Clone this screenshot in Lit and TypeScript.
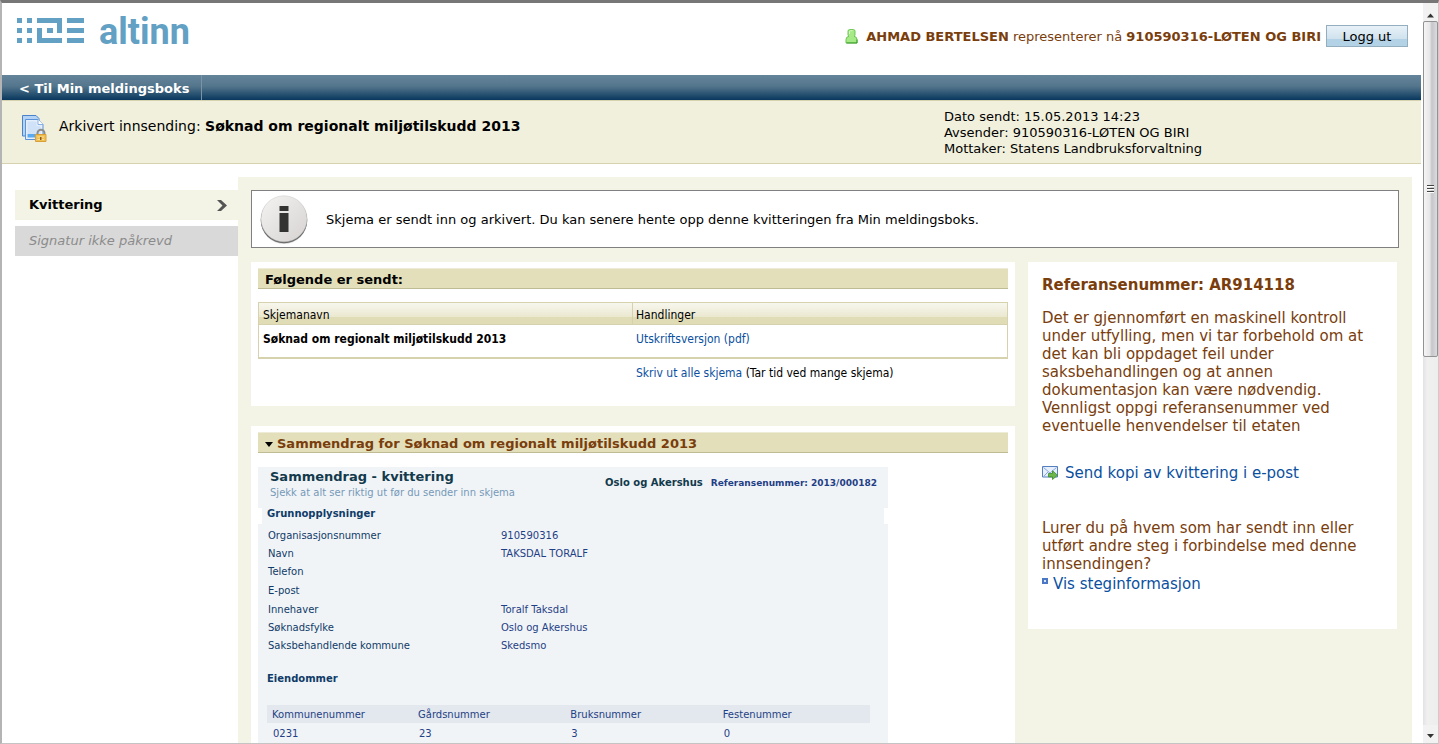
import { LitElement, html, css, svg } from "lit";
import { customElement, state } from "lit/decorators.js";

const logoMark = html`
  <svg class="mark" viewBox="0 0 68 26" aria-hidden="true" shape-rendering="crispEdges">
    <g fill="#62a0c4">
      ${[0, 10, 20].map(
        (y) => svg`<path d="M0 ${y}h5v5h-5zM10 ${y}h5v5h-5zM50 ${y}h17v5h-17z" />`
      )}
      <path d="M20 0H45V15H40V5H20zM20 10H25V20H45V25H20zM30 10h6v5h-6z" />
    </g>
  </svg>`;

const personIcon = html`
  <svg class="person" viewBox="0 0 13 15" aria-hidden="true">
    <path
      d="M4.500.6h4q1.500 0 1.500 1.600v3.600q0 1-1 1.500 3 .5 3 3.200v3.400H1v-3.400q0-2.700 3-3.200-1-.5-1-1.500V2.200Q3 .6 4.500.6z"
      fill="#a5ea86" stroke="#6cc553" stroke-width="1" />
    <path d="M1.500 14H12v-3.500" fill="none" stroke="#3b9a2c" />
    <path d="M4.500 5V2.500l1-.8h2" fill="none" stroke="#d8fbc8" />
  </svg>`;

const archiveIcon = html`
  <svg class="archive" viewBox="0 0 25 28" aria-hidden="true">
    <path d="M.5.5h13.500l3 3V21H.5z" fill="#b5d3f5" stroke="#4b82cc" />
    <path d="M3.500 4.500H16l5 5V24.500H3.500z" fill="#e4effb" stroke="#5c93d8" />
    <path d="M5.500 6.500h9v4.500h4v8h-13z" fill="#cfe2f8" />
    <path d="M16 4.500v5h5" fill="#fff" stroke="#86b0e6" />
    <path d="M5.500 19h10v3.500h-10z" fill="#5aaaf2" />
    <path d="M15.500 20v-1.800a3.500 3.500 0 0 1 7 0V20" fill="none" stroke="#8d8d8d" stroke-width="2" />
    <path d="M13.500 19.500h10.500v7h-10.500z" fill="#f0bf54" stroke="#d9a03a" />
    <path d="M15.500 22h6.500M15.500 24.500h6.500" stroke="#f9e09a" />
    <path d="M18 22h1.500v3H18z" fill="#8a5a14" />
  </svg>`;

const chevronIcon = html`
  <svg class="chevron" viewBox="0 0 10 11" aria-hidden="true">
    <path d="M0 0h4l6 5.500L4 11H0l5.500-5.500z" fill="#555" />
  </svg>`;

const infoIcon = html`
  <svg class="info-icon" viewBox="0 0 50 50" aria-hidden="true">
    <defs>
      <linearGradient id="disc" x1="0" y1="0" x2="1" y2="1">
        <stop offset="0" stop-color="#f4f3f2" />
        <stop offset="1" stop-color="#d6d3d1" />
      </linearGradient>
    </defs>
    <circle cx="25" cy="27" r="23" fill="#d4d4d4" />
    <circle cx="25" cy="26" r="23.300" fill="#666" />
    <circle cx="25" cy="24.800" r="23" fill="url(#disc)" stroke="#c9c9c9" stroke-width=".5" />
    <path d="M20.500 12h9v5h-9zM20.500 19h9v19h-9z" fill="#333332" />
  </svg>`;

const mailIcon = html`
  <svg class="mail" viewBox="0 0 16 14" aria-hidden="true">
    <path d="M.5.5h15v10.500H.5z" fill="#e6effb" stroke="#5580bd" />
    <path d="M1.500 1.500l6.500 5.500 6.500-5.500M1.500 10.500l4.500-4.500M14.500 10.500L10 6" fill="none" stroke="#86a9da" />
    <path d="M6.500 7.500h4V4.700l5 4.500-5 4.300v-2.600h-4z" fill="#6cb64c" stroke="#3f8a2a" stroke-width=".8" />
  </svg>`;

const facts: { label: string; value: string; tall?: boolean }[] = [
  { label: "Organisasjonsnummer", value: "910590316" },
  { label: "Navn", value: "TAKSDAL TORALF" },
  { label: "Telefon", value: "" },
  { label: "E-post", value: "", tall: true },
  { label: "Innehaver", value: "Toralf Taksdal" },
  { label: "Søknadsfylke", value: "Oslo og Akershus" },
  { label: "Saksbehandlende kommune", value: "Skedsmo" },
];

@customElement("app-root")
export class AppRoot extends LitElement {
  @state() private open = true;

  static styles = css`
    :host {
      display: block;
      font-family: Verdana, "DejaVu Sans", sans-serif;
      font-size: 13px;
      line-height: 16px;
      color: #000;
    }
    * { box-sizing: border-box; }
    h1, h2, h3, p, dl, dd { margin: 0; font-size: inherit; font-weight: inherit; }
    a { color: #0a50a1; text-decoration: none; }
    svg { display: block; flex: none; }

    .window {
      display: flex;
      height: 100vh;
      border: solid #b4b4b4;
      border-width: 3px 1px 1px 2px;
      border-top-color: #777;
      border-right-color: #ccc;
      border-bottom-color: #c4c4c4;
      overflow: hidden;
    }
    .page { flex: 1; min-width: 0; overflow: hidden; background: #fff; }

    .top { display: flex; justify-content: space-between; height: 72px; padding: 0 13px 0 15px; }
    .logo { display: flex; align-items: flex-start; gap: 14px; padding-top: 15px; color: #62a0c4; }
    .mark { width: 68px; height: 26px; }
    .word { font: bold 36px/28px Roboto, sans-serif; }
    .user { display: flex; align-items: center; height: 22px; margin-top: 22px; color: #7a3d0c; white-space: nowrap; }
    .user-text { padding-top: 2px; }
    .person { width: 13px; height: 15px; margin-right: 8px; }
    .logout {
      width: 82px;
      height: 22px;
      margin-left: 5px;
      padding: 2px 0 0;
      border: 1px solid #93aebf;
      background: linear-gradient(#e8f1f7, #cfe2ee 65%, #b4d2e6 66%);
      font: inherit;
      color: #000;
    }

    .nav { display: flex; height: 25px; background: linear-gradient(#64849a, #54768c 45%, #08375d); }
    .nav a {
      padding: 0 12px 0 17px;
      border-right: 1px solid #7b93a4;
      font-weight: bold;
      line-height: 27px;
      color: #fff;
    }

    .band {
      display: flex;
      justify-content: space-between;
      height: 64px;
      padding: 0 219px 0 20px;
      border: solid #d6d2b0;
      border-width: 1px 0;
      background: #f1f0dd;
    }
    .title { display: flex; gap: 12px; padding-top: 14px; font-size: 14px; line-height: 22px; }
    .archive { width: 25px; height: 28px; }
    .meta { padding-top: 8px; }

    .body { display: flex; align-items: flex-start; padding: 13px 9px 0 13px; }
    .steps { width: 223px; flex: none; padding-top: 13px; }
    .step {
      display: flex;
      align-items: center;
      justify-content: space-between;
      height: 30px;
      margin-bottom: 6px;
      padding: 0 11px 0 14px;
      line-height: 32px;
    }
    .current { background: #f3f4e5; font-weight: bold; color: #000; }
    .skipped { background: #d9d9d9; font-style: italic; color: #8b8b8b; }
    .chevron { width: 10px; height: 11px; }

    .main { flex: 1; min-width: 0; min-height: 600px; padding: 13px; background: #f3f4e5; }
    .notice {
      display: flex;
      align-items: center;
      gap: 17px;
      height: 58px;
      padding-left: 7px;
      border: 1px solid #808080;
      background: #fff;
    }
    .notice p { padding-top: 2px; }
    .info-icon { width: 50px; height: 50px; }
    .columns { display: flex; align-items: flex-start; gap: 13px; margin-top: 14px; padding-right: 2px; }
    .left { flex: 1; min-width: 0; }
    .panel { margin-bottom: 20px; padding: 6px 7px 7px; background: #fff; }
    .sent { min-height: 144px; }
    .bar {
      height: 21px;
      padding-left: 7px;
      border: solid #bfbb93;
      border-width: 1px 0;
      border-top-color: #eeecd6;
      background: #e2dfba;
      font-weight: bold;
      line-height: 22px;
    }

    .forms {
      width: 100%;
      margin-top: 13px;
      border: 1px solid #d6d2ae;
      border-bottom-width: 2px;
      border-collapse: separate;
      border-spacing: 0;
      table-layout: fixed;
      font: 12px/16px Tahoma, "DejaVu Sans Condensed", sans-serif;
      text-align: left;
    }
    .forms th {
      height: 22px;
      padding: 2px 4px 0;
      border-bottom: 1px solid #d6d2ae;
      background: linear-gradient(#f7f7ee, #ebe8d0 66%, #e0dcb6 67%);
      font-weight: normal;
    }
    .forms th:first-child { width: 373px; }
    .forms th + th { padding-left: 3px; border-left: 1px solid #d6d2ae; }
    .forms td { height: 32px; padding: 6px 4px 0; vertical-align: top; font-weight: bold; }
    .forms td + td { font-weight: normal; }
    .all { padding: 6px 0 0 378px; font: 12px/16px Tahoma, "DejaVu Sans Condensed", sans-serif; }

    .toggle {
      display: flex;
      align-items: center;
      gap: 4px;
      padding: 0;
      border: 0;
      background: none;
      font: inherit;
      color: #7a3d0c;
    }
    .caret { border: solid transparent; border-width: 5px 4px 0; border-top-color: #000; }

    .summary {
      width: 630px;
      max-width: 100%;
      margin-top: 14px;
      background: #f1f4f7;
      font-size: 10px;
      color: #1f3f86;
    }
    .summary-head { display: flex; justify-content: space-between; height: 41px; padding: 0 11px 0 12px; }
    .summary h2 { font-size: 13px; font-weight: bold; line-height: 19px; color: #123a4c; }
    .hint { line-height: 14px; color: #7599b8; }
    .ref { display: flex; align-items: baseline; gap: 8px; padding-top: 8px; font-size: 9px; font-weight: bold; }
    .county { font-size: 10px; color: #123a4c; }
    .basics { height: 16px; padding-left: 5px; border: solid #fff; border-width: 0 4px; }
    .summary h3 { font-size: 10px; font-weight: bold; line-height: 12px; color: #0f3b68; }
    .facts { padding: 3px 10px 0; }
    .fact { display: flex; height: 18px; line-height: 18px; }
    .tall { height: 20px; line-height: 20px; }
    .fact dt { width: 233px; color: #0f3b68; }
    .farms { padding: 18px 18px 0 9px; }
    .farms table {
      width: 100%;
      margin-top: 20px;
      border-collapse: collapse;
      table-layout: fixed;
      line-height: 18px;
      text-align: left;
    }
    .farms th { height: 18px; padding: 2px 0 0 5px; background: #e2e8ed; font-weight: normal; line-height: 16px; }
    .farms th:first-child { width: 146px; }
    .farms td { height: 20px; padding: 1px 0 0 6px; }

    .side {
      width: 369px;
      min-height: 367px;
      flex: none;
      padding: 14px 28px 0 14px;
      background: #fff;
      font-size: 15px;
      line-height: 18px;
      color: #7a3d0c;
    }
    .side h2 { font-weight: bold; margin-bottom: 15px; }
    .send { display: flex; align-items: center; gap: 7px; margin: 29px 0 37px; }
    .mail { width: 16px; height: 14px; }
    .more { display: flex; gap: 5px; margin-top: 2px; }
    .dot { width: 6px; height: 6px; margin-top: 3px; border: 2px solid #4a78c4; background: #dbe7f8; }

    .scroll {
      display: flex;
      flex-direction: column;
      align-items: center;
      width: 15px;
      flex: none;
      margin-left: 2px;
      background: linear-gradient(90deg, #e3e3e3, #f0f0f0 30%, #ededed);
    }
    .arrow { width: 15px; height: 18px; padding: 7px 4px 0; background: #f2f2f2; }
    .down { margin-top: auto; padding-top: 4px; }
    .thumb {
      display: flex;
      flex-direction: column;
      align-items: center;
      justify-content: center;
      gap: 1px;
      width: 100%;
      height: 336px;
      border: 1px solid #929292;
      border-radius: 2px;
      background: linear-gradient(90deg, #f5f5f5, #e6e6e8 45%, #c6c6ca 60%, #dcdcdf);
    }
    .grip { width: 7px; height: 2px; border-top: 1px solid #444; background: #fff; }
  `;

  render() {
    return html`
      <div class="window">
        <div class="page">
          <header class="top">
            <div class="logo">${logoMark}<span class="word">altinn</span></div>
            <div class="user">
              ${personIcon}
              <span class="user-text"><b>AHMAD BERTELSEN</b> representerer nå <b>910590316-LØTEN OG BIRI</b></span>
              <button class="logout" type="button">Logg ut</button>
            </div>
          </header>
          <nav class="nav"><a href="#">&lt; Til Min meldingsboks</a></nav>
          <section class="band">
            <div class="title">
              ${archiveIcon}
              <h1>Arkivert innsending: <b>Søknad om regionalt miljøtilskudd 2013</b></h1>
            </div>
            <div class="meta">
              <p>Dato sendt: 15.05.2013 14:23</p>
              <p>Avsender: 910590316-LØTEN OG BIRI</p>
              <p>Mottaker: Statens Landbruksforvaltning</p>
            </div>
          </section>
          <div class="body">
            <nav class="steps">
              <a class="step current" href="#">Kvittering ${chevronIcon}</a>
              <div class="step skipped">Signatur ikke påkrevd</div>
            </nav>
            <main class="main">
              <div class="notice">
                ${infoIcon}
                <p>Skjema er sendt inn og arkivert. Du kan senere hente opp denne kvitteringen fra Min meldingsboks.</p>
              </div>
              <div class="columns">
                <div class="left">${this.renderSent()} ${this.renderSummary()}</div>
                ${this.renderSide()}
              </div>
            </main>
          </div>
        </div>
        <div class="scroll" aria-hidden="true">
          <svg class="arrow" viewBox="0 0 7 4"><path d="M0 4L3.500 0 7 4z" fill="#333" /></svg>
          <div class="thumb">
            <div class="grip"></div>
            <div class="grip"></div>
            <div class="grip"></div>
          </div>
          <svg class="arrow down" viewBox="0 0 7 4"><path d="M0 0h7L3.500 4z" fill="#333" /></svg>
        </div>
      </div>
    `;
  }

  private renderSent() {
    return html`
      <section class="panel sent">
        <h2 class="bar">Følgende er sendt:</h2>
        <table class="forms">
          <thead>
            <tr><th>Skjemanavn</th><th>Handlinger</th></tr>
          </thead>
          <tbody>
            <tr>
              <td>Søknad om regionalt miljøtilskudd 2013</td>
              <td><a href="#">Utskriftsversjon (pdf)</a></td>
            </tr>
          </tbody>
        </table>
        <p class="all"><a href="#">Skriv ut alle skjema</a> (Tar tid ved mange skjema)</p>
      </section>
    `;
  }

  private renderSummary() {
    return html`
      <section class="panel">
        <h2 class="bar">
          <button class="toggle" type="button" aria-expanded=${this.open} @click=${() => (this.open = !this.open)}>
            <span class="caret"></span>Sammendrag for Søknad om regionalt miljøtilskudd 2013
          </button>
        </h2>
        ${this.open
          ? html`
              <div class="summary">
                <div class="summary-head">
                  <div>
                    <h2>Sammendrag - kvittering</h2>
                    <p class="hint">Sjekk at alt ser riktig ut før du sender inn skjema</p>
                  </div>
                  <p class="ref">
                    <span class="county">Oslo og Akershus</span><span>Referansenummer: 2013/000182</span>
                  </p>
                </div>
                <div class="basics"><h3>Grunnopplysninger</h3></div>
                <dl class="facts">
                  ${facts.map(
                    (f) => html`
                      <div class="fact ${f.tall ? "tall" : ""}"><dt>${f.label}</dt><dd>${f.value}</dd></div>
                    `
                  )}
                </dl>
                <div class="farms">
                  <h3>Eiendommer</h3>
                  <table>
                    <thead>
                      <tr><th>Kommunenummer</th><th>Gårdsnummer</th><th>Bruksnummer</th><th>Festenummer</th></tr>
                    </thead>
                    <tbody>
                      <tr><td>0231</td><td>23</td><td>3</td><td>0</td></tr>
                    </tbody>
                  </table>
                </div>
              </div>
            `
          : null}
      </section>
    `;
  }

  private renderSide() {
    return html`
      <aside class="side">
        <h2>Referansenummer: AR914118</h2>
        <p>
          Det er gjennomført en maskinell kontroll under utfylling, men vi tar forbehold om at det kan bli
          oppdaget feil under saksbehandlingen og at annen dokumentasjon kan være nødvendig. Vennligst oppgi
          referansenummer ved eventuelle henvendelser til etaten
        </p>
        <a class="send" href="#">${mailIcon}Send kopi av kvittering i e-post</a>
        <p>Lurer du på hvem som har sendt inn eller utført andre steg i forbindelse med denne innsendingen?</p>
        <a class="more" href="#"><span class="dot"></span>Vis steginformasjon</a>
      </aside>
    `;
  }
}
